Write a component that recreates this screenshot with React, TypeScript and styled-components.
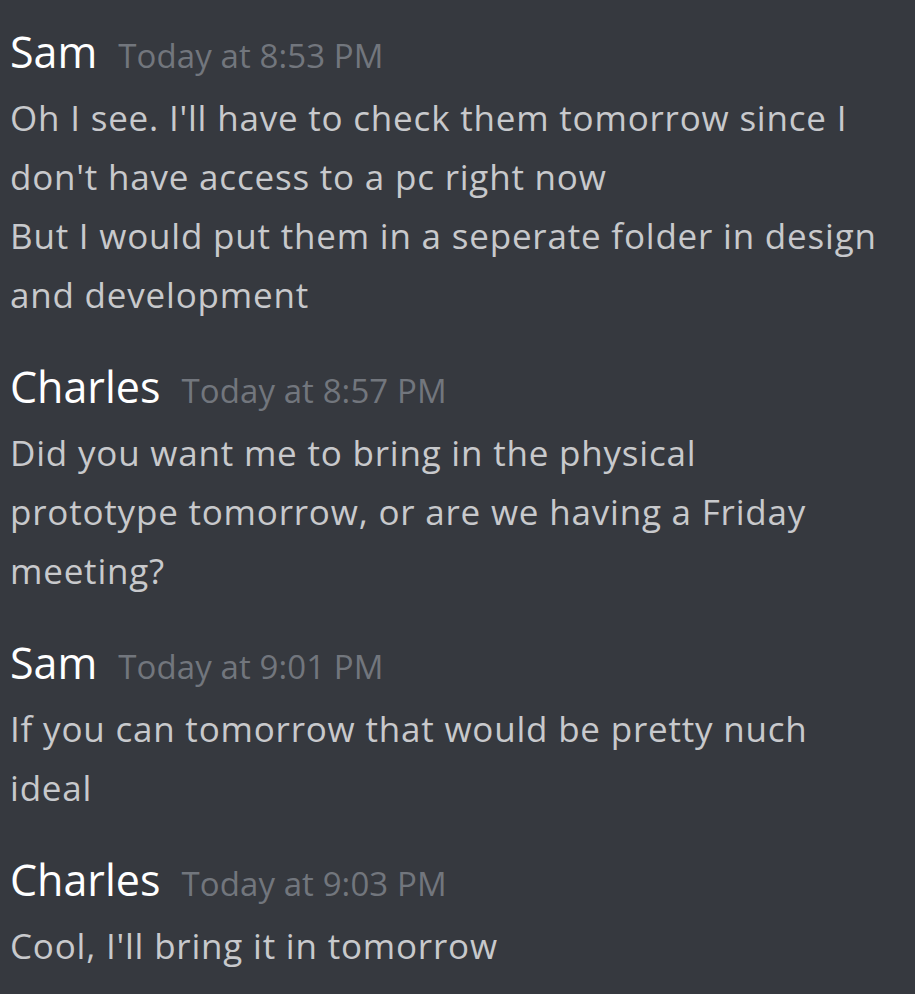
import React from "react";
import styled, { createGlobalStyle } from "styled-components";

const GlobalStyle = createGlobalStyle`
  html, body {
    margin: 0;
    padding: 0;
    background: #36393f;
  }
  body {
    font-family: "Open Sans", Lato, sans-serif;
    -webkit-font-smoothing: antialiased;
  }
`;

const Page = styled.main`
  min-height: 994px;
  box-sizing: border-box;
  padding: 16px 10px 0 10px;
  background: #36393f;
  display: flex;
  flex-direction: column;
  gap: 27px;
`;

const Group = styled.section`
  display: flex;
  flex-direction: column;
`;

const Header = styled.div`
  display: flex;
  align-items: baseline;
  gap: 21px;
  height: 72px;
  line-height: 72px;
  white-space: nowrap;
`;

const Author = styled.span`
  font-size: 43px;
  color: #ffffff;
  font-weight: 400;
`;

const Timestamp = styled.span`
  font-size: 33px;
  letter-spacing: 0.1px;
  color: #72767d;
`;

const Line = styled.div`
  font-size: 35px;
  letter-spacing: 0.8px;
  line-height: 59px;
  color: #c8c9cc;
  white-space: nowrap;
`;

type Msg = { author: string; time: string; lines: string[] };

const messages: Msg[] = [
  {
    author: "Sam",
    time: "Today at 8:53 PM",
    lines: [
      "Oh I see. I'll have to check them tomorrow since I",
      "don't have access to a pc right now",
      "But I would put them in a seperate folder in design",
      "and development",
    ],
  },
  {
    author: "Charles",
    time: "Today at 8:57 PM",
    lines: [
      "Did you want me to bring in the physical",
      "prototype tomorrow, or are we having a Friday",
      "meeting?",
    ],
  },
  {
    author: "Sam",
    time: "Today at 9:01 PM",
    lines: ["If you can tomorrow that would be pretty nuch", "ideal"],
  },
  {
    author: "Charles",
    time: "Today at 9:03 PM",
    lines: ["Cool, I'll bring it in tomorrow"],
  },
];

export default function App() {
  return (
    <>
      <GlobalStyle />
      <Page>
        {messages.map((m, i) => (
          <Group key={i}>
            <Header>
              <Author>{m.author}</Author>
              <Timestamp>{m.time}</Timestamp>
            </Header>
            {m.lines.map((l, j) => (
              <Line key={j}>{l}</Line>
            ))}
          </Group>
        ))}
      </Page>
    </>
  );
}
